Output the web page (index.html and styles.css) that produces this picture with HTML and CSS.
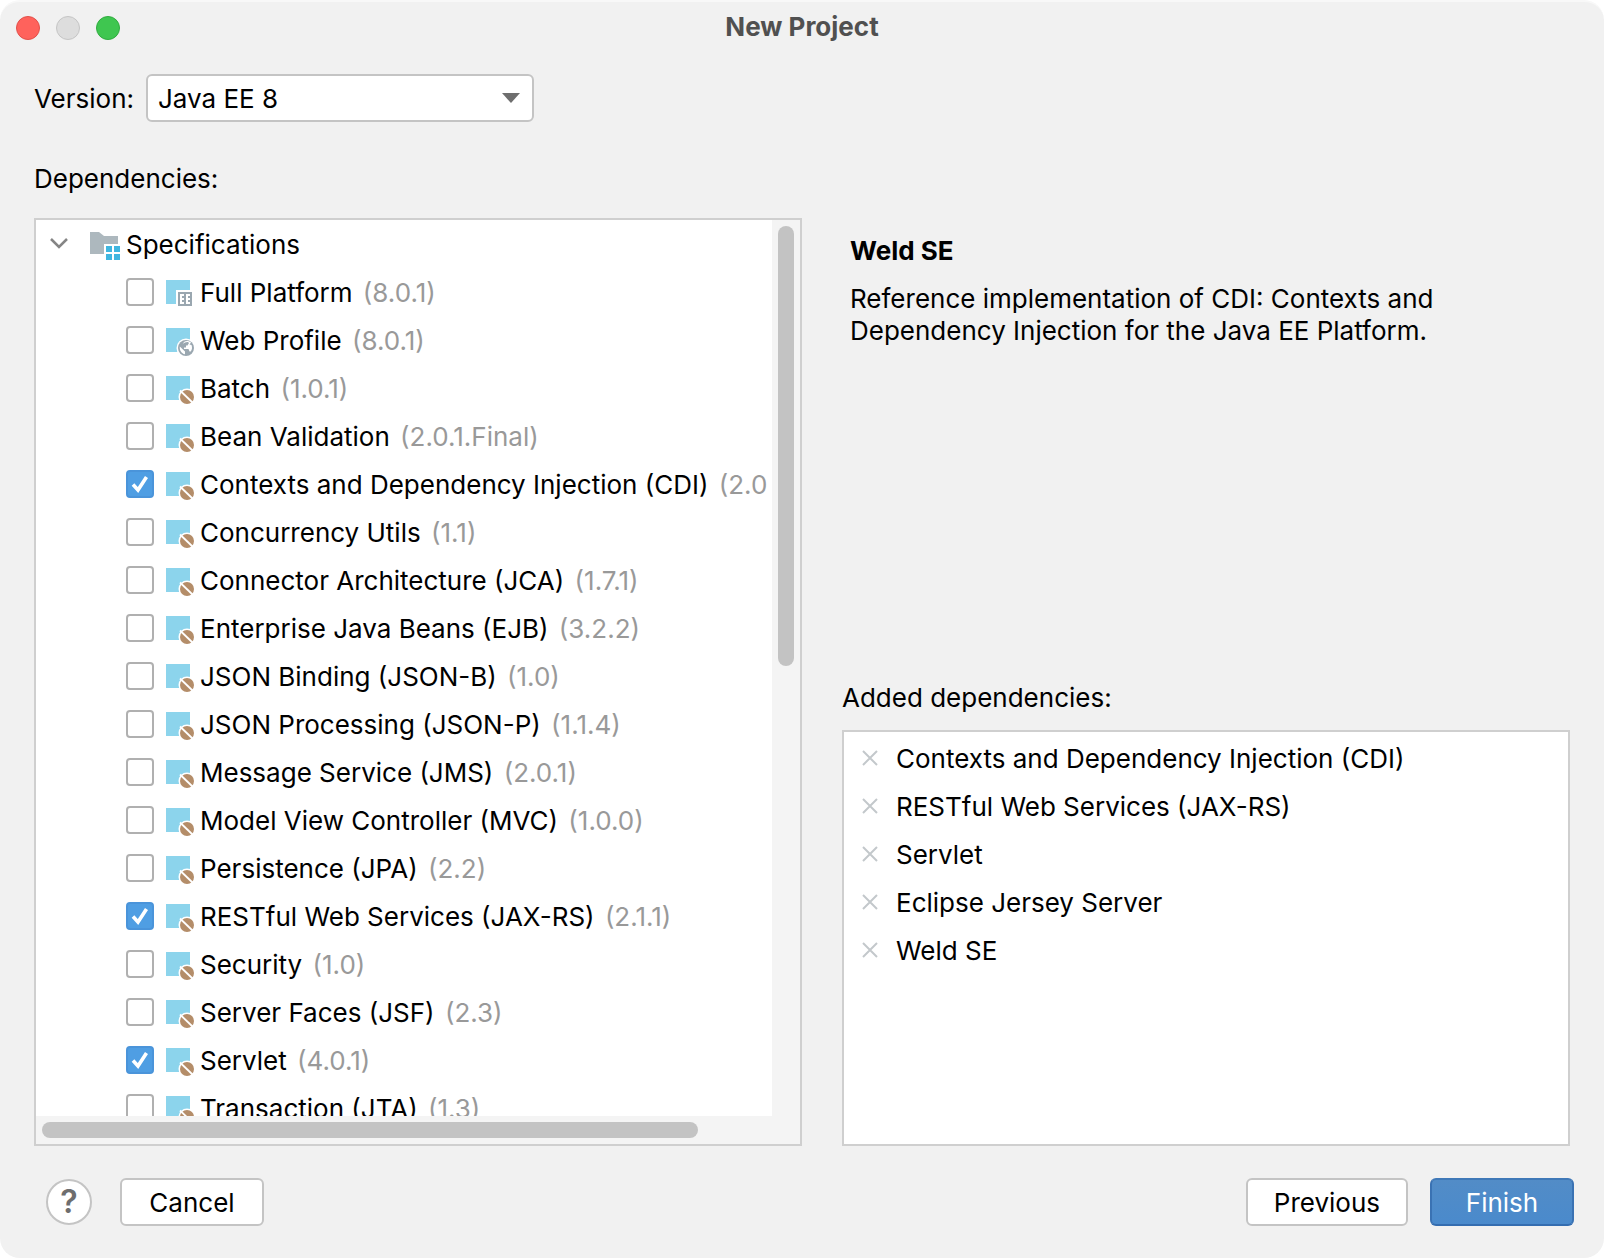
FILE: index.html
```html
<!DOCTYPE html>
<html lang="en">
<head>
<meta charset="utf-8">
<meta name="viewport" content="width=device-width, initial-scale=1">
<title>New Project</title>
<link rel="stylesheet" href="styles.css">
</head>
<body>
<svg class="symbols" aria-hidden="true">
  <symbol id="folder" viewBox="0 0 32 32">
    <path fill="#adb8be" d="M2 4h9l5 4h14v8H16v10H2z"/>
    <path fill="#40b6e0" d="M18 18h6v6h-6zM26 18h6v6h-6zM18 26h6v6h-6zM26 26h6v6h-6z"/>
  </symbol>
  <symbol id="platform" viewBox="0 0 32 32">
    <path fill="#8cd4ec" d="M4 4h24v10H14v14H4z"/>
    <path fill="#9aa7b0" fill-rule="evenodd" d="M16 16h14v14H16zM18 18v10h4v-2h-2v-2h2v-2h-2v-2h2v-2zM24 18v10h4v-2h-2v-2h2v-2h-2v-2h2v-2z"/>
  </symbol>
  <symbol id="web" viewBox="0 0 32 32">
    <path fill="#8cd4ec" d="M4 4h24v24H4z"/>
    <circle cx="24" cy="24" r="9.500" fill="#fff"/>
    <circle cx="24" cy="24" r="8" fill="#9aa7b0"/>
    <path fill="#fff" d="M17.800 22.500l5.200 5v2.700c-3.500-.500-5.600-4-5.200-7.700zM20.500 20.500c1-1.500 3-2.700 5.500-2.500l1 1-1.500 2.500h-1.500v2h-2v1.500h4.500l1 2.500h1.200c1.500-2 1.700-4 .800-6.500l-2-.500 1.500-2c-2-1.800-5-2-7-.500z"/>
  </symbol>
  <symbol id="bean" viewBox="0 0 32 32">
    <path fill="#8cd4ec" d="M4 4h24v24H4z"/>
    <circle cx="25" cy="25" r="8.500" fill="#fff"/>
    <circle cx="25" cy="25" r="7" fill="#b48d69"/>
    <path stroke="#fff" stroke-width="1.800" d="M18 18.500l13 12.500"/>
  </symbol>
  <symbol id="remove" viewBox="0 0 16 16">
    <path fill="none" stroke="#c3c8cb" stroke-width="2" d="M1 1l14 14M15 1L1 15"/>
  </symbol>
</svg>

<div class="dialog">
  <header class="titlebar">
    <div class="lights">
      <button class="light light-close" aria-label="Close"></button>
      <button class="light light-minimize" aria-label="Minimize" disabled></button>
      <button class="light light-zoom" aria-label="Zoom"></button>
    </div>
    <h1 class="title">New Project</h1>
  </header>

  <main class="content">
    <div class="version">
      <label class="text" for="version">Version:</label>
      <div class="select-wrap">
        <select id="version" class="select"><option>Java EE 8</option></select>
        <svg class="select-arrow" viewBox="0 0 18 10" aria-hidden="true"><path fill="#6e6e6e" d="M0 0h18l-9 10z"/></svg>
      </div>
    </div>
    <h2 class="caption">Dependencies:</h2>

    <div class="columns">
      <section class="tree" aria-label="Dependencies">
        <div class="tree-view">
          <div class="group">
            <svg class="chevron" viewBox="0 0 18 12" aria-hidden="true"><path fill="none" stroke="#858585" stroke-width="2.500" d="M1 1l8 8 8-8"/></svg>
            <svg class="icon"><use href="#folder"/></svg>
            <span class="text">Specifications</span>
          </div>
          <label class="row"><input type="checkbox" class="check"><svg class="icon"><use href="#platform"/></svg><span class="text">Full Platform <span class="ver">(8.0.1)</span></span></label>
          <label class="row"><input type="checkbox" class="check"><svg class="icon"><use href="#web"/></svg><span class="text">Web Profile <span class="ver">(8.0.1)</span></span></label>
          <label class="row"><input type="checkbox" class="check"><svg class="icon"><use href="#bean"/></svg><span class="text">Batch <span class="ver">(1.0.1)</span></span></label>
          <label class="row"><input type="checkbox" class="check"><svg class="icon"><use href="#bean"/></svg><span class="text">Bean Validation <span class="ver">(2.0.1.Final)</span></span></label>
          <label class="row"><input type="checkbox" class="check" checked><svg class="icon"><use href="#bean"/></svg><span class="text">Contexts and Dependency Injection (CDI) <span class="ver">(2.0</span></span></label>
          <label class="row"><input type="checkbox" class="check"><svg class="icon"><use href="#bean"/></svg><span class="text">Concurrency Utils <span class="ver">(1.1)</span></span></label>
          <label class="row"><input type="checkbox" class="check"><svg class="icon"><use href="#bean"/></svg><span class="text">Connector Architecture (JCA) <span class="ver">(1.7.1)</span></span></label>
          <label class="row"><input type="checkbox" class="check"><svg class="icon"><use href="#bean"/></svg><span class="text">Enterprise Java Beans (EJB) <span class="ver">(3.2.2)</span></span></label>
          <label class="row"><input type="checkbox" class="check"><svg class="icon"><use href="#bean"/></svg><span class="text">JSON Binding (JSON-B) <span class="ver">(1.0)</span></span></label>
          <label class="row"><input type="checkbox" class="check"><svg class="icon"><use href="#bean"/></svg><span class="text">JSON Processing (JSON-P) <span class="ver">(1.1.4)</span></span></label>
          <label class="row"><input type="checkbox" class="check"><svg class="icon"><use href="#bean"/></svg><span class="text">Message Service (JMS) <span class="ver">(2.0.1)</span></span></label>
          <label class="row"><input type="checkbox" class="check"><svg class="icon"><use href="#bean"/></svg><span class="text">Model View Controller (MVC) <span class="ver">(1.0.0)</span></span></label>
          <label class="row"><input type="checkbox" class="check"><svg class="icon"><use href="#bean"/></svg><span class="text">Persistence (JPA) <span class="ver">(2.2)</span></span></label>
          <label class="row"><input type="checkbox" class="check" checked><svg class="icon"><use href="#bean"/></svg><span class="text">RESTful Web Services (JAX-RS) <span class="ver">(2.1.1)</span></span></label>
          <label class="row"><input type="checkbox" class="check"><svg class="icon"><use href="#bean"/></svg><span class="text">Security <span class="ver">(1.0)</span></span></label>
          <label class="row"><input type="checkbox" class="check"><svg class="icon"><use href="#bean"/></svg><span class="text">Server Faces (JSF) <span class="ver">(2.3)</span></span></label>
          <label class="row"><input type="checkbox" class="check" checked><svg class="icon"><use href="#bean"/></svg><span class="text">Servlet <span class="ver">(4.0.1)</span></span></label>
          <label class="row"><input type="checkbox" class="check"><svg class="icon"><use href="#bean"/></svg><span class="text">Transaction (JTA) <span class="ver">(1.3)</span></span></label>
        </div>
        <div class="track track-v"><div class="thumb"></div></div>
        <div class="track track-h"><div class="thumb"></div></div>
      </section>

      <div class="side">
        <section class="details">
          <h2 class="details-title">Weld SE</h2>
          <p class="details-text">Reference implementation of CDI: Contexts and Dependency Injection for the Java EE Platform.</p>
        </section>
        <h2 class="caption">Added dependencies:</h2>
        <ul class="added">
          <li class="added-item"><button class="remove" aria-label="Remove Contexts and Dependency Injection (CDI)"><svg viewBox="0 0 16 16"><use href="#remove"/></svg></button><span class="text">Contexts and Dependency Injection (CDI)</span></li>
          <li class="added-item"><button class="remove" aria-label="Remove RESTful Web Services (JAX-RS)"><svg viewBox="0 0 16 16"><use href="#remove"/></svg></button><span class="text">RESTful Web Services (JAX-RS)</span></li>
          <li class="added-item"><button class="remove" aria-label="Remove Servlet"><svg viewBox="0 0 16 16"><use href="#remove"/></svg></button><span class="text">Servlet</span></li>
          <li class="added-item"><button class="remove" aria-label="Remove Eclipse Jersey Server"><svg viewBox="0 0 16 16"><use href="#remove"/></svg></button><span class="text">Eclipse Jersey Server</span></li>
          <li class="added-item"><button class="remove" aria-label="Remove Weld SE"><svg viewBox="0 0 16 16"><use href="#remove"/></svg></button><span class="text">Weld SE</span></li>
        </ul>
      </div>
    </div>
  </main>

  <footer class="footer">
    <button class="help" aria-label="Help">?</button>
    <button class="button">Cancel</button>
    <div class="footer-end">
      <button class="button">Previous</button>
      <button class="button button-primary">Finish</button>
    </div>
  </footer>
</div>
</body>
</html>
```
FILE: styles.css
```css
* {
  box-sizing: border-box;
}

body {
  margin: 0;
  background: #fff;
  color: #000;
  font: 26px/32px Inter, "Liberation Sans", sans-serif;
}

h1, h2, p, ul {
  margin: 0;
  padding: 0;
  font-size: 26px;
}

button, select, input {
  margin: 0;
  padding: 0;
  font: inherit;
  color: inherit;
}

.symbols {
  display: none;
}

.dialog {
  display: flex;
  flex-direction: column;
  height: 100vh;
  background: #f1f1f1;
  border-top: 2px solid #f8f8f8;
  border-radius: 20px;
}

/* Text beside an icon or a control */
.text {
  padding-top: 2px;
}

/* Title bar */

.titlebar {
  display: grid;
  grid-template-columns: 1fr auto 1fr;
  align-items: center;
  height: 52px;
  padding: 0 16px;
}

.lights {
  display: flex;
  gap: 16px;
}

.light {
  width: 24px;
  height: 24px;
  border: 1px solid;
  border-radius: 50%;
}

.light-close {
  background: #ff625c;
  border-color: #e2504a;
}

.light-minimize {
  background: #dddddd;
  border-color: #c5c5c5;
}

.light-zoom {
  background: #3fc650;
  border-color: #30ac3f;
}

.title {
  padding-bottom: 2px;
  color: #505050;
  font-weight: 700;
}

/* Main area */

.content {
  display: flex;
  flex: 1;
  flex-direction: column;
  min-height: 0;
  padding: 20px 34px 0;
}

.version {
  display: flex;
  align-items: center;
  gap: 12px;
  margin-bottom: 41px;
}

.select-wrap {
  display: grid;
  align-items: center;
  width: 388px;
}

.select {
  grid-area: 1 / 1;
  height: 48px;
  padding: 2px 10px 0;
  appearance: none;
  background: #fff;
  border: 2px solid #c4c4c4;
  border-radius: 6px;
}

.select-arrow {
  grid-area: 1 / 1;
  justify-self: end;
  width: 18px;
  height: 10px;
  margin-right: 14px;
  pointer-events: none;
}

.caption {
  font-weight: 400;
}

.columns {
  display: grid;
  flex: 1;
  grid-template-columns: 96fr 91fr;
  gap: 40px;
  min-height: 0;
  margin-top: 23px;
}

/* Dependency tree */

.tree {
  display: grid;
  grid-template: minmax(0, 1fr) 28px / minmax(0, 1fr) 28px;
  min-height: 0;
  background: #f4f4f4;
  border: 2px solid #cfcfcf;
}

.tree-view {
  overflow: hidden;
  background: #fff;
  white-space: nowrap;
}

.group, .row {
  display: flex;
  align-items: center;
  gap: 6px;
  height: 48px;
}

.group {
  padding-left: 14px;
}

.row {
  padding-left: 90px;
}

.chevron {
  width: 18px;
  height: 12px;
  margin-right: 14px;
}

.icon {
  flex: none;
  width: 32px;
  height: 32px;
}

.check {
  flex: none;
  width: 28px;
  height: 28px;
  margin-right: 2px;
  appearance: none;
  background: #fff;
  border: 2px solid #b0b0b0;
  border-radius: 4px;
}

.check:checked {
  background: #4f9ee3 url("data:image/svg+xml,%3Csvg xmlns='http://www.w3.org/2000/svg' viewBox='0 0 24 24'%3E%3Cpath d='M5 12.500l5 5.500L18.500 5' fill='none' stroke='white' stroke-width='3.600'/%3E%3C/svg%3E") center / 24px 24px no-repeat;
  border-color: #4a94da;
}

.ver {
  margin-left: 3px;
  color: #999;
}

.track {
  display: grid;
  padding: 6px;
}

.track-v {
  grid-template-rows: 110fr 111fr;
}

.track-h {
  grid-template-columns: 164fr 17fr;
}

.thumb {
  background: #c3c3c3;
  border-radius: 8px;
}

/* Details and added dependencies */

.side {
  display: grid;
  grid-template-rows: 29fr auto 27fr;
  min-height: 0;
}

.details {
  padding: 17px 8px;
}

.details-text {
  margin-top: 16px;
}

.added {
  margin-top: 16px;
  padding: 2px 18px;
  background: #fff;
  border: 2px solid #cfcfcf;
  list-style: none;
}

.added-item {
  display: flex;
  align-items: center;
  gap: 18px;
  height: 48px;
}

.remove {
  display: flex;
  width: 16px;
  height: 16px;
  background: none;
  border: 0;
}

/* Footer */

.footer {
  display: flex;
  align-items: center;
  gap: 28px;
  padding: 32px 30px 32px 46px;
}

.footer-end {
  display: flex;
  gap: 22px;
  margin-left: auto;
}

.help {
  width: 46px;
  height: 46px;
  background: #fff;
  border: 2px solid #c4c4c4;
  border-radius: 50%;
  color: #6e6e6e;
  font-size: 32px;
  font-weight: 600;
}

.button {
  min-width: 144px;
  height: 48px;
  padding: 2px 26px 0;
  background: #fff;
  border: 2px solid #c4c4c4;
  border-radius: 6px;
}

.button-primary {
  background: linear-gradient(#528cc7, #4a8acc);
  border-color: #4079b8 #3a72b3 #346db0;
  color: #fff;
}
```
